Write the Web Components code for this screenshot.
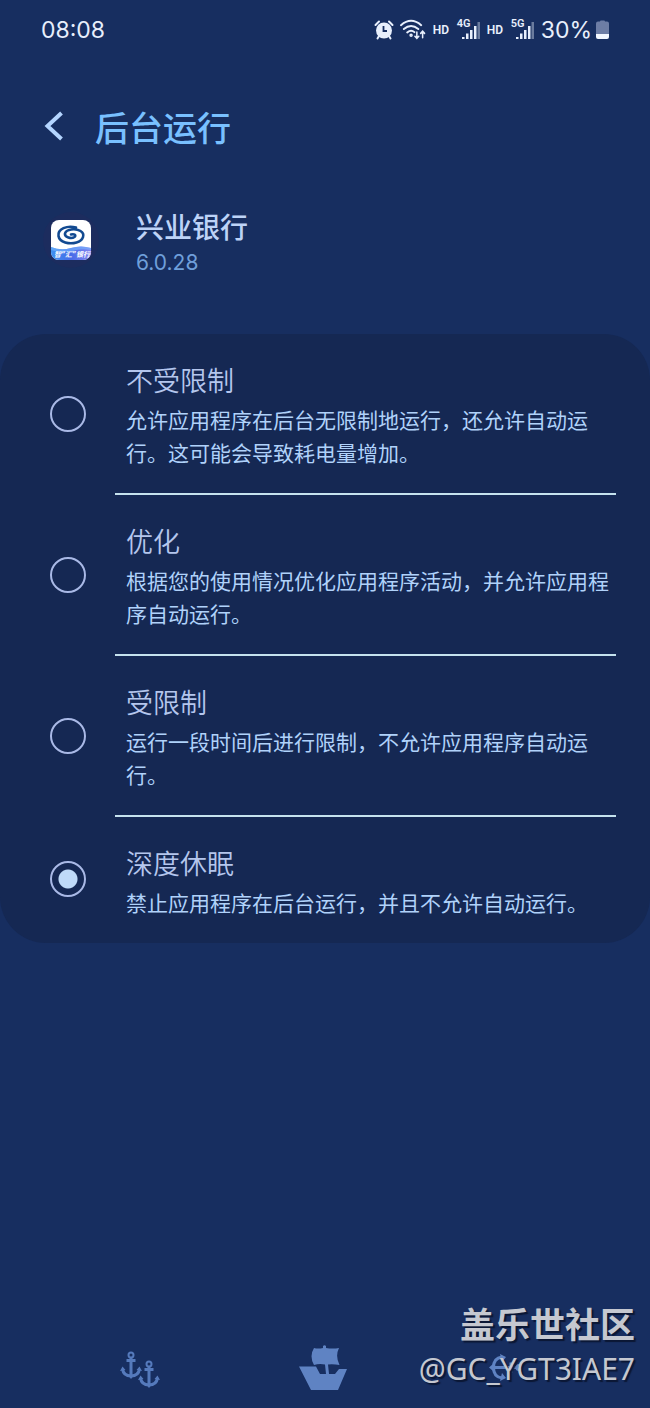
<!DOCTYPE html>
<html lang="zh-CN">
<head>
    <meta charset="UTF-8">
    <meta name="viewport" content="width=device-width, initial-scale=1.0">
    <title>后台运行</title>
    <style>
        body {
            margin: 0;
            background: #172e60;
            font-family: Inter, "Noto Sans CJK SC", sans-serif;
        }
    </style>
</head>
<body>
    <phone-screen>
        <status-bar slot="top" time="08:08" battery="30%"></status-bar>
        <page-header>后台运行</page-header>
        <app-info version="6.0.28">兴业银行</app-info>
        <option-list></option-list>
        <nav-bar slot="bottom"></nav-bar>
        <community-mark slot="mark" user="@GC_YGT3IAE7">盖乐世社区</community-mark>
    </phone-screen>

<script>
    class PhoneScreen extends HTMLElement {
        constructor() {
            super();
            this.attachShadow({ mode: "open" }).innerHTML = `
                <style>
                    :host { display: flex; flex-direction: column; min-height: 100vh; position: relative; overflow: hidden; }
                    main { flex: 1; }
                </style>
                <slot name="top"></slot>
                <main><slot></slot></main>
                <slot name="bottom"></slot>
                <slot name="mark"></slot>
            `;
        }
    }

    class SignalIcon extends HTMLElement {
        constructor() {
            super();
            this.attachShadow({ mode: "open" }).innerHTML = `
                <style>
                    :host { display: flex; align-items: center; height: 24px; color: #e8effc; font-family: Roboto, sans-serif; font-weight: 600; }
                    .hd { font-size: 12px; line-height: 20px; width: 24px; }
                    .bars { display: grid; width: 23px; height: 24px; }
                    .bars > * { grid-area: 1 / 1; }
                    .net { font-size: 11px; line-height: 12px; }
                    svg { display: block; }
                </style>
                <span class="hd">HD</span>
                <span class="bars">
                    <svg width="23" height="24" viewBox="0 0 23 24" fill="currentColor">
                        <rect x="5" y="19" width="2.500" height="2"/>
                        <rect x="9" y="15.500" width="2.500" height="5.500"/>
                        <rect x="13" y="12" width="2.500" height="9"/>
                        <rect x="17" y="8" width="2.500" height="13"/>
                        <rect x="20.500" y="4" width="2.500" height="17" opacity=".4"/>
                    </svg>
                    <span class="net">${this.getAttribute("net")}</span>
                </span>
            `;
        }
    }

    class StatusBar extends HTMLElement {
        constructor() {
            super();
            this.attachShadow({ mode: "open" }).innerHTML = `
                <style>
                    :host { display: flex; justify-content: space-between; align-items: center; height: 60px; padding: 0 41px; color: #e8effc; }
                    .time { font-size: 23px; line-height: 30px; }
                    .icons { display: flex; align-items: center; gap: 7px; }
                    .state { display: flex; align-items: center; gap: 6px; }
                    .power { display: flex; align-items: center; gap: 4px; font-size: 23px; line-height: 30px; }
                    svg { display: block; }
                </style>
                <span class="time">${this.getAttribute("time")}</span>
                <div class="icons">
                    <div class="state">
                        <svg width="20" height="20" viewBox="0 0 20 20">
                            <g fill="none" stroke="#e8effc" stroke-width="2" stroke-linecap="round">
                                <path d="M1.500 5 5 1.500M18.500 5 15 1.500M5 16 3.500 18.500M15 16l1.500 2.500"/>
                            </g>
                            <circle cx="10" cy="10.500" r="8" fill="#e8effc"/>
                            <path d="M9.500 6v5H13" fill="none" stroke="#172e60" stroke-width="1.800"/>
                        </svg>
                        <svg width="26" height="22" viewBox="0 0 27 22" fill="none" stroke="#e8effc" stroke-width="2" stroke-linecap="round">
                            <path d="M1 6Q11.500-3 22 6M4 10Q11.500 3.500 19 10M7.500 13.500Q11.500 10 15 13.200"/>
                            <circle cx="11.500" cy="16.500" r=".8"/>
                            <path d="M17.500 13v6.500m-2-2 2 2.200 2-2.200M23.500 19v-6.500m-2 2 2-2.200 2 2.200" stroke-width="1.600"/>
                        </svg>
                    </div>
                    <signal-icon net="4G"></signal-icon>
                    <signal-icon net="5G"></signal-icon>
                    <div class="power">
                        <span>${this.getAttribute("battery")}</span>
                        <svg width="13" height="20" viewBox="0 0 13 20">
                            <path d="M4 1.500Q4 .5 5 .5h3q1 0 1 1h2q2 0 2 2V15H0V3.500q0-2 2-2z" fill="#6d7da5"/>
                            <path d="M0 14h13v3q0 2-2 2H2q-2 0-2-2z" fill="#f3f7ff"/>
                        </svg>
                    </div>
                </div>
            `;
        }
    }

    class PageHeader extends HTMLElement {
        constructor() {
            super();
            this.attachShadow({ mode: "open" }).innerHTML = `
                <style>
                    :host { display: flex; align-items: center; gap: 19px; height: 46px; padding: 46px 36px 0; }
                    button { display: flex; padding: 0 8px 6px; background: none; border: none; color: #b4d5ff; cursor: pointer; }
                    h1 { margin: 0; font-size: 34px; line-height: 46px; font-weight: 500; color: #79c0ff; }
                </style>
                <button aria-label="返回">
                    <svg width="24" height="32" viewBox="0 0 24 32" fill="none" stroke="currentColor" stroke-width="4">
                        <path d="M17.500 3 3.500 16l14 13"/>
                    </svg>
                </button>
                <h1><slot></slot></h1>
            `;
        }
    }

    class AppInfo extends HTMLElement {
        constructor() {
            super();
            this.attachShadow({ mode: "open" }).innerHTML = `
                <style>
                    :host { display: flex; align-items: flex-start; gap: 36px; padding: 56px 42px; }
                    .icon { display: block; }
                    .logo-text { font-size: 7px; font-weight: 700; font-style: italic; }
                    h2 { margin: 0; font-size: 28px; line-height: 40px; font-weight: 500; color: #bdd3f7; }
                    p { margin: 0; font-size: 21px; line-height: 30px; color: #6f9fda; }
                </style>
                <svg class="icon" width="58" height="64" viewBox="0 -3 58 64">
                    <defs>
                        <linearGradient id="wave" x1="0" x2="1">
                            <stop stop-color="#3e91ef"/>
                            <stop offset=".5" stop-color="#466be8"/>
                            <stop offset="1" stop-color="#8585f0"/>
                        </linearGradient>
                        <clipPath id="tile"><rect x="9" y="9" width="40" height="40" rx="8"/></clipPath>
                    </defs>
                    <circle cx="29" cy="29" r="28" fill="#1c2c5e"/>
                    <g clip-path="url(#tile)">
                        <path d="M9 9h40v40H9z" fill="#fff"/>
                        <path d="M9 36q10 4 20 1t20 0v12H9z" fill="url(#wave)"/>
                        <path d="M9 36q10 4 20 1t20 0v2q-10-2-18 1-11 3-22-1z" fill="#78b8ff" opacity=".6"/>
                    </g>
                    <path d="M34 16.500C25 14 15.500 18 16.500 25c1 6.500 11 8.500 18 6.500s9-8.500 4-11.500-14.500-2-15.500 2.500c-.7 4 6.500 5.500 9.500 3.500 2-1.500 0-3.500-3.500-2.500" fill="none" stroke="#124a91" stroke-width="2.600" stroke-linecap="round"/>
                    <text class="logo-text" x="12" y="46" fill="#fff">智“汇”银行</text>
                </svg>
                <div>
                    <h2><slot></slot></h2>
                    <p>${this.getAttribute("version")}</p>
                </div>
            `;
        }
    }

    class OptionList extends HTMLElement {
        constructor() {
            super();
            this.attachShadow({ mode: "open" });
            this.selected = "deep";
            this.options = [
                { id: "free", title: "不受限制", text: "允许应用程序在后台无限制地运行，还允许自动运行。这可能会导致耗电量增加。" },
                { id: "optimized", title: "优化", text: "根据您的使用情况优化应用程序活动，并允许应用程序自动运行。" },
                { id: "restricted", title: "受限制", text: "运行一段时间后进行限制，不允许应用程序自动运行。" },
                { id: "deep", title: "深度休眠", text: "禁止应用程序在后台运行，并且不允许自动运行。" },
            ];
            this.render();
        }

        render() {
            this.shadowRoot.innerHTML = `
                <style>
                    :host { display: block; background: #152853; border-radius: 46px; }
                    .row { display: grid; grid-template-columns: 36px 1fr; column-gap: 29px; align-items: center; padding: 0 34px 0 50px; }
                    input { appearance: none; box-sizing: border-box; width: 36px; height: 36px; margin: 0 0 2px; border: 2px solid #a9b9e6; border-radius: 50%; }
                    input:checked { background: radial-gradient(circle, #bfdaf8 9px, transparent 10px); }
                    label { display: block; padding: 30px 0 22px 11px; border-bottom: 2px solid #c5e2ee; }
                    .row:last-child label { padding-bottom: 22px; border-bottom: none; }
                    .title { display: block; margin-bottom: 4px; font-size: 27px; line-height: 36px; font-weight: 350; color: #b4c6ed; }
                    .text { display: block; padding-bottom: 1px; font-size: 21px; line-height: 33px; color: #b0d2fa; }
                </style>
                ${this.options.map(({ id, title, text }) => `
                <div class="row">
                    <input type="radio" name="mode" id="${id}" value="${id}" ${id === this.selected ? "checked" : ""}>
                    <label for="${id}"><span class="title">${title}</span><span class="text">${text}</span></label>
                </div>
                `).join("")}
            `;
        }
    }

    class NavBar extends HTMLElement {
        constructor() {
            super();
            this.attachShadow({ mode: "open" }).innerHTML = `
                <style>
                    :host { display: grid; grid-template-columns: repeat(3, 1fr); height: 80px; padding: 0 52px 0 48px; }
                    button { display: flex; align-items: center; justify-content: center; padding: 0; background: none; border: none; color: #5f83c3; cursor: pointer; }
                    svg { display: block; }
                    .recent { color: #557abc; }
                </style>
                <svg width="0" height="0" style="position: absolute">
                    <symbol id="anchor" viewBox="0 0 22 28">
                        <circle cx="11" cy="4" r="2.500" fill="none" stroke="currentColor" stroke-width="2"/>
                        <path d="M11 7v19M6.500 9.500h9M2.500 18q1 7 8.500 7t8.500-7" fill="none" stroke="currentColor" stroke-width="3"/>
                        <path d="M0 20 2.500 15.500 5.500 19zM22 20l-2.500-4.500-3 3.500zM8.500 25H13.500L11 28z" fill="currentColor"/>
                    </symbol>
                </svg>
                <button class="recent" aria-label="最近">
                    <svg width="40" height="42" viewBox="0 -4 40 42">
                        <use href="#anchor" x="0" y="0" width="22" height="28"/>
                        <use href="#anchor" x="18" y="9" width="22" height="28"/>
                    </svg>
                </button>
                <button aria-label="主页">
                    <svg width="48" height="46" viewBox="0 0 48 46" fill="currentColor">
                        <path d="M24 3V1q1.500-1.500 3 0v2q7 1 13 0-4 8 .5 17-6-1-11.500-.5l1 9.500H36l4-5h8L39 45H12L0 21.500h17l4 7.500h6l-1-9.500q-6-1-11 .5-5-9 0-17 4 1 9 0z"/>
                    </svg>
                </button>
                <button aria-label="返回">
                    <svg width="34" height="28" viewBox="0 0 34 28">
                        <g transform="translate(0 27) rotate(-90)">
                            <g fill="none" stroke="currentColor" stroke-width="3">
                                <path d="M13.500 2v27M8.500 22h10M3 13q1-8.500 10.500-8.500T24 13"/>
                                <circle cx="13.500" cy="30" r="2.500" stroke-width="2"/>
                            </g>
                            <path d="M0 11 3 17 8 13zM19 13l5 4 3-6zM10 4h7L13.500 0z" fill="currentColor"/>
                        </g>
                    </svg>
                </button>
            `;
        }
    }

    class CommunityMark extends HTMLElement {
        constructor() {
            super();
            this.attachShadow({ mode: "open" }).innerHTML = `
                <style>
                    :host { position: absolute; right: 15px; bottom: 19px; text-align: right; color: #c5c8d0; text-shadow: 2px 2px 1px #0b1734; pointer-events: none; }
                    .name { font-size: 35px; line-height: 48px; font-weight: 700; }
                    .user { font-family: "Noto Sans", sans-serif; font-size: 30px; line-height: 40px; }
                </style>
                <div class="name"><slot></slot></div>
                <div class="user">${this.getAttribute("user")}</div>
            `;
        }
    }

    customElements.define("phone-screen", PhoneScreen);
    customElements.define("signal-icon", SignalIcon);
    customElements.define("status-bar", StatusBar);
    customElements.define("page-header", PageHeader);
    customElements.define("app-info", AppInfo);
    customElements.define("option-list", OptionList);
    customElements.define("nav-bar", NavBar);
    customElements.define("community-mark", CommunityMark);
</script>
</body>
</html>
